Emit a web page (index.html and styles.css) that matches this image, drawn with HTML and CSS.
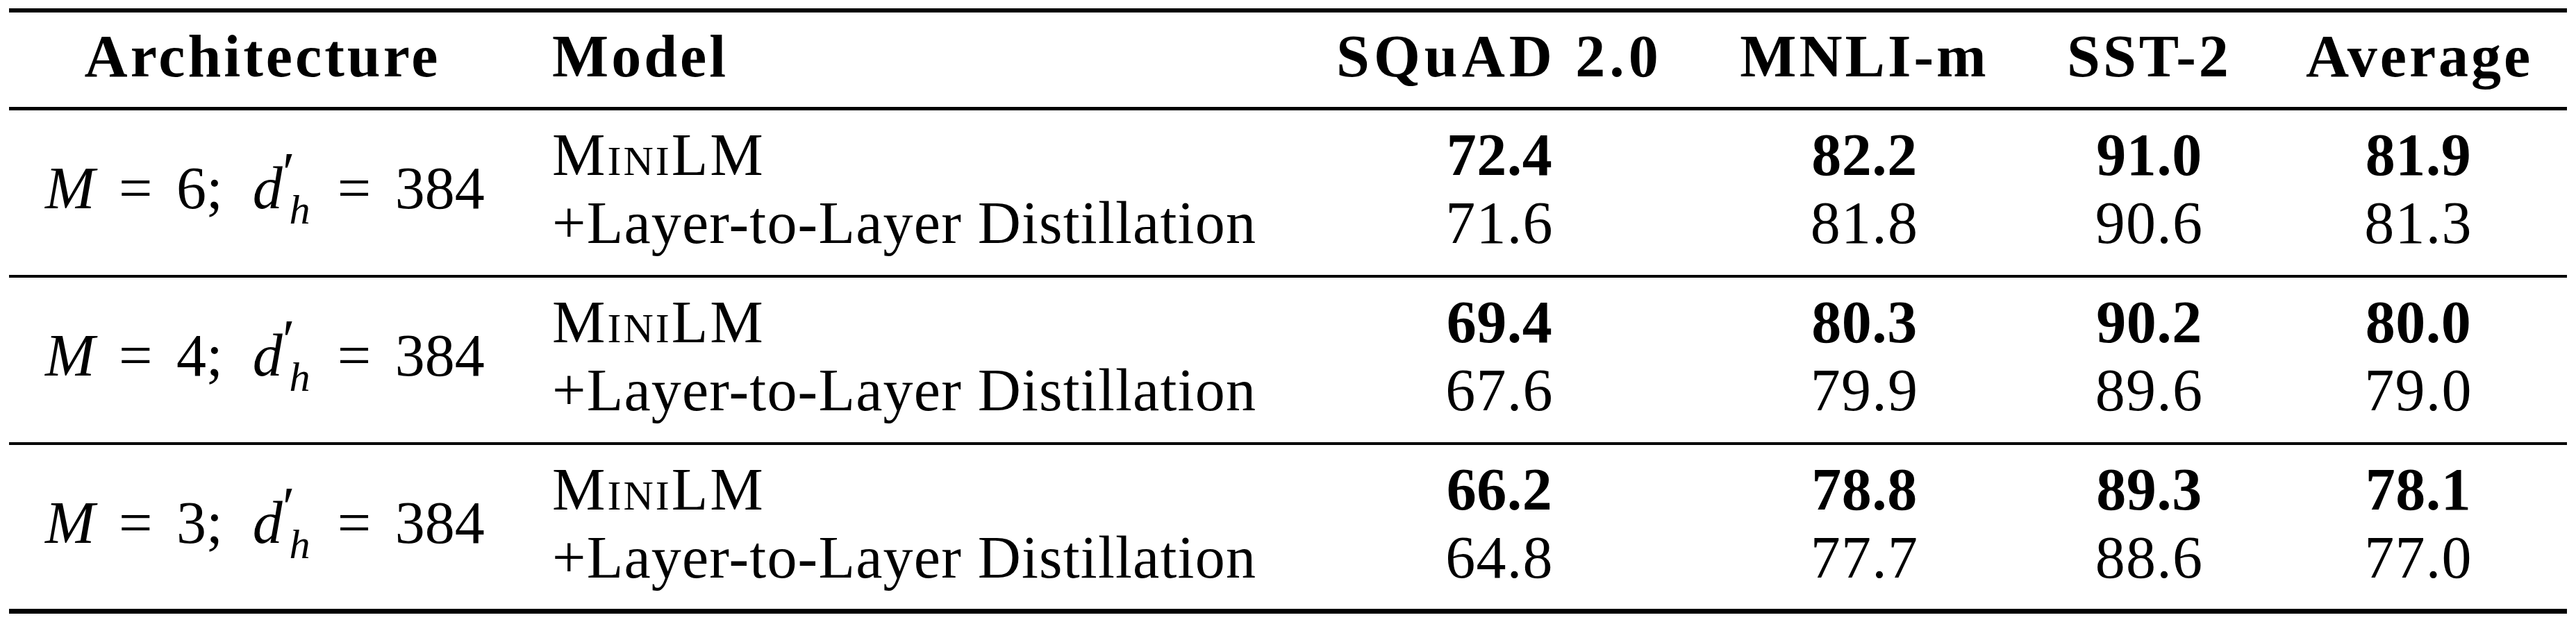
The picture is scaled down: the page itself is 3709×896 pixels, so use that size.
FILE: index.html
```html
<!DOCTYPE html>
<html>
<head>
<meta charset="utf-8">
<link rel="stylesheet" href="styles.css">
</head>
<body>
<table class="results">
  <colgroup>
    <col class="c-arch"><col class="c-model"><col class="c-squad"><col class="c-mnli"><col class="c-sst"><col class="c-avg">
  </colgroup>
  <thead>
    <tr>
      <th class="center">Architecture</th>
      <th class="left">Model</th>
      <th class="center wide">SQuAD 2.0</th>
      <th class="center">MNLI-m</th>
      <th class="center">SST-2</th>
      <th class="center">Average</th>
    </tr>
  </thead>
  <tbody class="group">
    <tr class="first">
      <td class="arch" rowspan="2"><span class="math"><i>M</i><span class="eq">=</span>6;<span class="thin"></span><i>d</i><span class="prime">′</span><span class="sub"><i>h</i></span><span class="eq">=</span>384</span></td>
      <td class="left sc">MiniLM</td>
      <td class="center b">72.4</td><td class="center b">82.2</td><td class="center b">91.0</td><td class="center b">81.9</td>
    </tr>
    <tr class="last">
      <td class="left">+Layer-to-Layer Distillation</td>
      <td class="center">71.6</td><td class="center">81.8</td><td class="center">90.6</td><td class="center">81.3</td>
    </tr>
  </tbody>
  <tbody class="group">
    <tr class="first">
      <td class="arch" rowspan="2"><span class="math"><i>M</i><span class="eq">=</span>4;<span class="thin"></span><i>d</i><span class="prime">′</span><span class="sub"><i>h</i></span><span class="eq">=</span>384</span></td>
      <td class="left sc">MiniLM</td>
      <td class="center b">69.4</td><td class="center b">80.3</td><td class="center b">90.2</td><td class="center b">80.0</td>
    </tr>
    <tr class="last">
      <td class="left">+Layer-to-Layer Distillation</td>
      <td class="center">67.6</td><td class="center">79.9</td><td class="center">89.6</td><td class="center">79.0</td>
    </tr>
  </tbody>
  <tbody class="group final">
    <tr class="first">
      <td class="arch" rowspan="2"><span class="math"><i>M</i><span class="eq">=</span>3;<span class="thin"></span><i>d</i><span class="prime">′</span><span class="sub"><i>h</i></span><span class="eq">=</span>384</span></td>
      <td class="left sc">MiniLM</td>
      <td class="center b">66.2</td><td class="center b">78.8</td><td class="center b">89.3</td><td class="center b">78.1</td>
    </tr>
    <tr class="last">
      <td class="left">+Layer-to-Layer Distillation</td>
      <td class="center">64.8</td><td class="center">77.7</td><td class="center">88.6</td><td class="center">77.0</td>
    </tr>
  </tbody>
</table>
</body>
</html>
```
FILE: styles.css
```css
html, body {
  margin: 0;
  padding: 0;
  background: #ffffff;
}
body {
  font-family: "Liberation Serif", "Times New Roman", serif;
  color: #000000;
}
.results {
  margin: 12px 0 0 13px;
  width: 3683px;
  table-layout: fixed;
  border-collapse: separate;
  border-spacing: 0;
  font-size: 86px;
  line-height: 98px;
}
.c-arch { width: 730px; }
.c-model { width: 1127px; }
.c-squad { width: 578px; }
.c-mnli { width: 473px; }
.c-sst { width: 347px; }
.c-avg { width: 428px; }

th, td {
  padding: 0 52px;
  white-space: nowrap;
  vertical-align: baseline;
}
th {
  font-weight: bold;
  letter-spacing: 4px;
  border-top: 6px solid #000;
  border-bottom: 5px solid #000;
  padding-top: 14px;
  padding-bottom: 24px;
}
th.wide { letter-spacing: 6px; }
.left { text-align: left; }
.center { text-align: center; }
td { letter-spacing: 1.2px; }
.b { font-weight: bold; letter-spacing: 0.5px; }
.sc { font-variant: small-caps; letter-spacing: 3px; }

.group .first td { padding-top: 15px; }
.group .last td { padding-bottom: 26px; border-bottom: 4px solid #000; }
.group.final .last td { padding-bottom: 25px; border-bottom: 7px solid #000; }

.group td.arch {
  text-align: center;
  vertical-align: middle;
  padding-top: 0;
  padding-bottom: 13px;
  border-bottom: 4px solid #000;
  letter-spacing: 0;
}
.group.final td.arch {
  padding-bottom: 12px;
  border-bottom: 7px solid #000;
}
.math i { font-style: italic; }
.eq { margin: 0 0.4em; }
.thin { display: inline-block; width: 0.5em; }
.prime {
  display: inline-block;
  line-height: 0;
  font-size: 0.95em;
  vertical-align: 0.3em;
  letter-spacing: -0.1em;
}
.sub {
  display: inline-block;
  line-height: 0;
  font-size: 0.7em;
  vertical-align: -22px;
  margin-right: 0.08em;
}
```
